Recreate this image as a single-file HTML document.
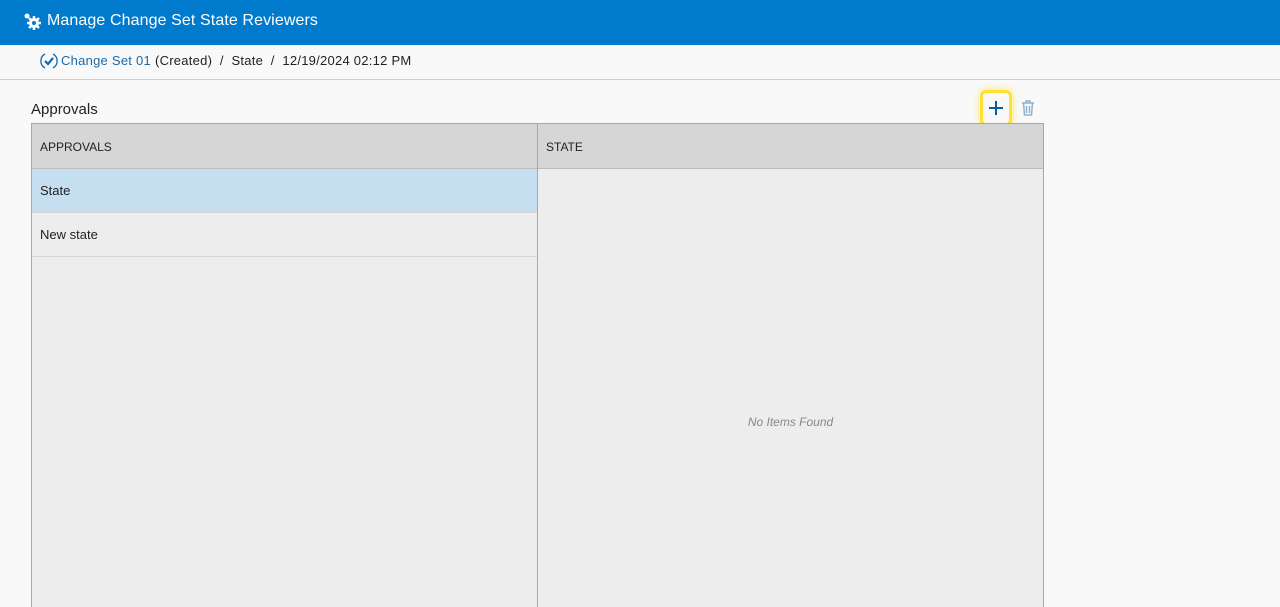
<!DOCTYPE html>
<html style="overflow:hidden;height:607px"><head><style>
*{box-sizing:border-box;margin:0;padding:0}
body{width:1280px;height:607px;overflow:hidden;background:#f9f9f9;font-family:"Liberation Sans",sans-serif;position:relative}
.hdr{position:absolute;left:0;top:0;width:1280px;height:45px;background:#007acc;color:#fff;font-size:16px}
.hdr span{position:absolute;left:47px;top:12px;letter-spacing:0.1px}
.bc{position:absolute;left:0;top:45px;width:1280px;height:35px;border-bottom:1px solid #d0d0d0;font-size:13px;color:#222}
.bc .t{position:absolute;top:8px;letter-spacing:0.25px}
.ttl{position:absolute;left:31px;top:101px;font-size:15px;color:#222}
.grid{position:absolute;left:31px;top:123px;width:1013px;height:484px;border:1px solid #a8a8a8;border-bottom:none;background:#ededed}
.col{position:absolute;top:0;bottom:0}
.h{height:45px;background:#d6d6d6;border-bottom:1px solid #bcbcbc;font-size:12px;padding:16px 8px;color:#222}
.r{height:44px;border-bottom:1px solid #d6d6d6;font-size:13px;padding:14px 8px;color:#222}
</style></head><body>
<div class="hdr">
<svg style="position:absolute;left:22px;top:12px" width="20" height="20" viewBox="0 0 20 20" fill="#fff"><circle cx="12" cy="11" r="5"/><g stroke="#fff" stroke-width="2.5"><line x1="12" y1="4" x2="12" y2="18"/><line x1="5" y1="11" x2="19" y2="11"/><line x1="7" y1="6" x2="17" y2="16"/><line x1="17" y1="6" x2="7" y2="16"/></g><circle cx="12" cy="11" r="2" fill="#007acc"/><circle cx="5" cy="4" r="2.5"/></svg>
<span>Manage Change Set State Reviewers</span></div>
<div class="bc">
<svg style="position:absolute;left:40px;top:7px" width="18" height="18" viewBox="0 0 18 18"><path d="M5 2A8 8 0 0 0 5 16M13 2A8 8 0 0 1 13 16" stroke="#0a6bb0" fill="none" stroke-width="1.3"/><path d="M5 9l3 3 5-6" stroke="#0a6bb0" fill="none" stroke-width="2.2"/></svg>
<span class="t" style="left:61px;color:#1a6aa8">Change Set 01</span>
<span class="t" style="left:155px">(Created) &nbsp;/ &nbsp;State &nbsp;/ &nbsp;12/19/2024 02:12 PM</span></div>
<div class="ttl">Approvals</div>
<div style="position:absolute;left:980px;top:90px;width:32px;height:36px;border:3px solid #ffe033;border-radius:6px;box-shadow:0 0 8px #ffe86a;background:#f9f9f9"></div>
<svg style="position:absolute;left:988px;top:100px" width="16" height="16"><path d="M8 1v14M1 8h14" stroke="#0a5c9c" stroke-width="2"/></svg>
<svg style="position:absolute;left:1021px;top:100px" width="14" height="16" viewBox="0 0 14 16" fill="none" stroke="#8fb4cf" stroke-width="1.5"><path d="M1 3h12M5 3V1h4v2M2.5 3l1 12h7l1-12M5.5 6v7M8.5 6v7"/></svg>
<div class="grid">
<div class="col" style="left:0;width:506px;border-right:1px solid #a8a8a8">
<div class="h">APPROVALS</div>
<div class="r" style="background:#c6dff0">State</div>
<div class="r">New state</div>
</div>
<div class="col" style="left:506px;right:0">
<div class="h">STATE</div>
<div style="position:absolute;top:291px;width:100%;text-align:center;font-style:italic;font-size:12px;color:#888">No Items Found</div>
</div></div>
</body></html>
